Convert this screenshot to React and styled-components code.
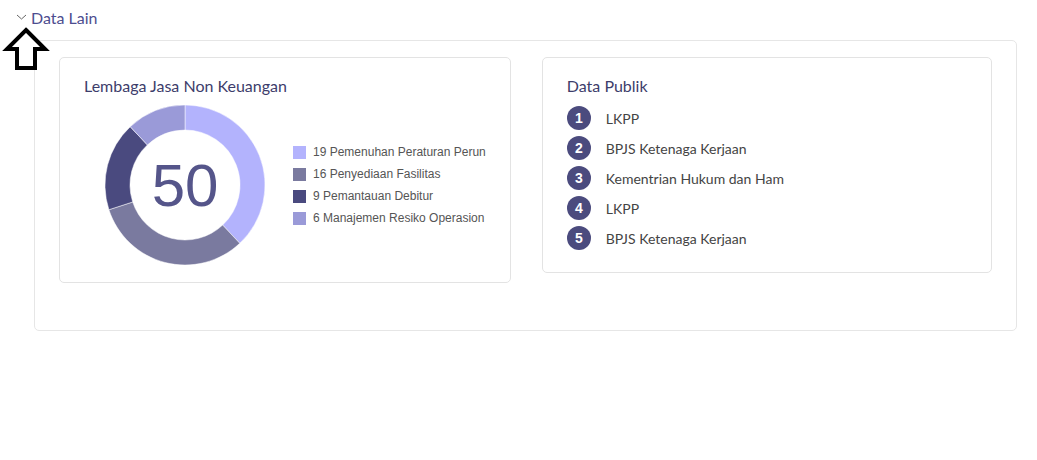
import React from 'react';
import styled, { createGlobalStyle } from 'styled-components';

const GlobalStyle = createGlobalStyle`
  body {
    margin: 0;
    background: #fff;
    font-family: Lato, 'Liberation Sans', sans-serif;
  }
`;

const Page = styled.div`
  position: relative;
  width: 1037px;
  height: 460px;
  padding: 8px 20px 0 16px;
  box-sizing: border-box;
`;

const Header = styled.div`
  display: flex;
  align-items: center;
  gap: 4px;
  height: 18px;
  color: #4d4d8f;
  font-size: 16px;
`;

const Panel = styled.div`
  margin: 14px 0 0 18px;
  height: 291px;
  box-sizing: border-box;
  border: 1px solid #e6e6e6;
  border-radius: 5px;
  padding: 16px 24px;
  display: flex;
  align-items: flex-start;
  gap: 31px;
`;

const Card = styled.div`
  flex: 1;
  height: ${({ h }) => h}px;
  box-sizing: border-box;
  border: 1px solid #e3e3e3;
  border-radius: 5px;
  padding: 19px 24px 0;
`;

const Title = styled.div`
  font-size: 16px;
  color: #3d3d6b;
  line-height: 18px;
`;

const ChartRow = styled.div`
  display: flex;
  align-items: center;
  gap: 27px;
  margin-top: 9px;
  padding-left: 20px;
`;

const Legend = styled.div`
  display: flex;
  flex-direction: column;
  gap: 8px;
  font-family: 'Liberation Sans', Arial, sans-serif;
  font-size: 12px;
  color: #555;
  margin-top: 0;
`;

const LegendItem = styled.div`
  display: flex;
  align-items: center;
  gap: 7px;
  height: 14px;
  white-space: nowrap;
`;

const Swatch = styled.span`
  width: 13px;
  height: 13px;
  background: ${({ c }) => c};
  flex: none;
`;

const List = styled.div`
  display: flex;
  flex-direction: column;
  gap: 6px;
  margin-top: 11px;
`;

const ListItem = styled.div`
  display: flex;
  align-items: center;
  gap: 15px;
  height: 24px;
  font-size: 14px;
  color: #444;
`;

const Badge = styled.span`
  width: 24px;
  height: 24px;
  border-radius: 50%;
  background: #4b4b7e;
  color: #fff;
  font-family: 'Liberation Sans', Arial, sans-serif;
  font-weight: 700;
  font-size: 14px;
  display: flex;
  align-items: center;
  justify-content: center;
  flex: none;
`;

const Pointer = styled.svg`
  position: absolute;
  left: 0;
  top: 26px;
`;

const slices = [
  { v: 19, label: '19 Pemenuhan Peraturan Perun', c: '#b3b3fd' },
  { v: 16, label: '16 Penyediaan Fasilitas', c: '#7a7a9f' },
  { v: 9, label: '9 Pemantauan Debitur', c: '#4a4a7f' },
  { v: 6, label: '6 Manajemen Resiko Operasion', c: '#9a9ad8' },
];

const items = ['LKPP', 'BPJS Ketenaga Kerjaan', 'Kementrian Hukum dan Ham', 'LKPP', 'BPJS Ketenaga Kerjaan'];

const Donut = () => {
  const total = slices.reduce((s, x) => s + x.v, 0);
  const R = 80;
  const r = 55;
  const cx = 81;
  const cy = 81;
  let a = -Math.PI / 2;
  const pt = (rad, ang) => [cx + rad * Math.cos(ang), cy + rad * Math.sin(ang)];
  return (
    <svg width="162" height="162" viewBox="0 0 162 162">
      {slices.map((s) => {
        const a0 = a;
        const a1 = a + (s.v / total) * Math.PI * 2;
        a = a1;
        const large = a1 - a0 > Math.PI ? 1 : 0;
        const [x0, y0] = pt(R, a0);
        const [x1, y1] = pt(R, a1);
        const [x2, y2] = pt(r, a1);
        const [x3, y3] = pt(r, a0);
        return (
          <path
            key={s.label}
            d={`M${x0} ${y0} A${R} ${R} 0 ${large} 1 ${x1} ${y1} L${x2} ${y2} A${r} ${r} 0 ${large} 0 ${x3} ${y3}Z`}
            fill={s.c}
            stroke="#fff"
            strokeWidth="0.5"
          />
        );
      })}
      <text
        x={cx}
        y={cy + 21}
        textAnchor="middle"
        fontFamily="'Liberation Sans', Arial, sans-serif"
        fontSize="60"
        fill="#55558a"
      >
        {total}
      </text>
    </svg>
  );
};

export default function App() {
  return (
    <Page>
      <GlobalStyle />
      <Header>
        <svg width="11" height="8" viewBox="0 0 11 8">
          <path d="M1 2l4.5 4L10 2" fill="none" stroke="#666" strokeWidth="1" />
        </svg>
        Data Lain
      </Header>
      <Panel>
        <Card h={226}>
          <Title>Lembaga Jasa Non Keuangan</Title>
          <ChartRow>
            <Donut />
            <Legend>
              {slices.map((s) => (
                <LegendItem key={s.label}>
                  <Swatch c={s.c} />
                  {s.label}
                </LegendItem>
              ))}
            </Legend>
          </ChartRow>
        </Card>
        <Card h={216}>
          <Title>Data Publik</Title>
          <List>
            {items.map((t, i) => (
              <ListItem key={i}>
                <Badge>{i + 1}</Badge>
                {t}
              </ListItem>
            ))}
          </List>
        </Card>
      </Panel>
      <Pointer width="50" height="46" viewBox="0 0 50 46">
        <path d="M26 4 L45 23 L35 23 L35 42 L17 42 L17 23 L7 23 Z" fill="#fff" stroke="#000" strokeWidth="4" strokeLinejoin="miter" />
      </Pointer>
    </Page>
  );
}
